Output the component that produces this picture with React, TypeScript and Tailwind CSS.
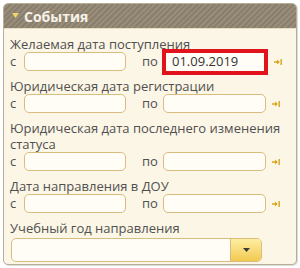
import React from "react"

const Jump = () => (
  <svg width="8" height="8" viewBox="0 0 8 8" className="ml-[6px] shrink-0">
    <path d="M0 4h5" stroke="#d9a41c" strokeWidth="1.4" />
    <path d="M3 1.5L5.8 4L3 6.5z" fill="#d9a41c" />
    <path d="M7.2 1v6" stroke="#d9a41c" strokeWidth="1.4" />
  </svg>
)

const Field = ({ className = "" }: { className?: string }) => (
  <div
    className={
      "h-[19px] rounded-[5px] border border-[#d8bd7e] bg-[#fffdf6] shrink-0 " +
      className
    }
  />
)

const Label = ({ children }: { children: React.ReactNode }) => (
  <div className="text-[13px] leading-[16px] text-[#505050]">{children}</div>
)

const Range = ({ highlight }: { highlight?: boolean }) => (
  <div className="flex items-center h-[19px] mb-[7px] text-[13px] text-[#505050]">
    <span className="w-[14px] shrink-0">с</span>
    <Field className="w-[102px]" />
    <span className="ml-[16px] w-[20px] shrink-0">по</span>
    {highlight ? (
      <div className="w-[106px] h-[26px] -my-[4px] border-[4px] border-[#e1141c] bg-[#fffdf6] flex items-center pl-[6px] text-[#333] shrink-0">
        01.09.2019
      </div>
    ) : (
      <Field className="w-[103px] ml-[1px]" />
    )}
    <Jump />
  </div>
)

export default function App() {
  return (
    <div className="w-[300px] h-[268px] bg-white pt-[3px] px-[3px] font-['Open_Sans',sans-serif]">
      <div className="h-[262px] rounded-[5px] border border-[#b8ad95] bg-[#fcf6e6] overflow-hidden shadow-[1px_1px_1px_rgba(0,0,0,0.15)]">
        <div className="h-[25px] flex items-center pl-[8px] border-b border-[#e9dfc6] bg-[repeating-linear-gradient(135deg,#8a7f6c_0px,#8a7f6c_2px,#988d7b_2px,#988d7b_4px)]">
          <svg width="7" height="5" viewBox="0 0 7 5" className="mr-[5px] -mt-[2px]">
            <path d="M0 0h7L3.5 5z" fill="#f2d36a" />
          </svg>
          <span className="text-[14px] font-bold text-[#f7f2e8]">События</span>
        </div>
        <div className="pt-[7px] px-[6px]">
          <Label>Желаемая дата поступления</Label>
          <Range highlight />
          <Label>Юридическая дата регистрации</Label>
          <Range />
          <Label>
            <div>Юридическая дата последнего изменения</div>
            <div>статуса</div>
          </Label>
          <Range />
          <Label>Дата направления в ДОУ</Label>
          <Range />
          <Label>Учебный год направления</Label>
          <div className="mt-[2px] ml-[1px] w-[251px] h-[24px] flex rounded-[5px] border border-[#d8bd7e] bg-[#fffdf6] overflow-hidden">
            <div className="flex-1" />
            <div className="w-[31px] border-l border-[#d8bd7e] bg-gradient-to-b from-[#fdeea0] to-[#f2c94e] flex items-center justify-center">
              <svg width="7" height="4" viewBox="0 0 7 4">
                <path d="M0 0h7L3.5 4z" fill="#3a3a3a" />
              </svg>
            </div>
          </div>
        </div>
      </div>
    </div>
  )
}
